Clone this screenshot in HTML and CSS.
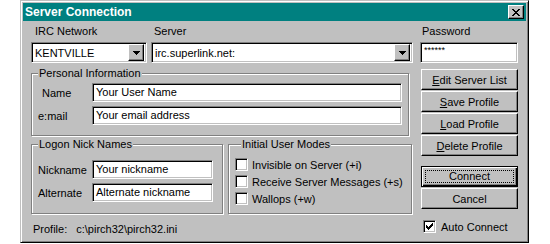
FILE: index.html
```html
<!DOCTYPE html>
<html lang="en">
<head>
    <meta charset="UTF-8">
    <title>Server Connection</title>
    <link rel="stylesheet" href="styles.css">
</head>
<body>
    <div class="dialog">
        <div class="titlebar">
            <span class="title">Server Connection</span>
            <button class="close" type="button">
                <svg width="8" height="7" viewBox="0 0 8 7" shape-rendering="crispEdges">
                    <path d="M0 0h2v1h-2z M6 0h2v1h-2z M1 1h2v1h-2z M5 1h2v1h-2z M2 2h4v1h-4z M3 3h2v1h-2z M2 4h4v1h-4z M1 5h2v1h-2z M5 5h2v1h-2z M0 6h2v1h-2z M6 6h2v1h-2z" fill="#000"/>
                </svg>
            </button>
        </div>

        <div class="content">
            <div class="main">
                <div class="top-row">
                    <div class="field network">
                        <label class="caption">IRC Network</label>
                        <div class="combo">
                            <span class="combo-text">KENTVILLE</span>
                            <span class="drop"><svg width="7" height="4" viewBox="0 0 7 4" shape-rendering="crispEdges"><path d="M0 0h7v1h-7z M1 1h5v1h-5z M2 2h3v1h-3z M3 3h1v1h-1z" fill="#000"/></svg></span>
                        </div>
                    </div>
                    <div class="field server">
                        <label class="caption">Server</label>
                        <div class="combo">
                            <span class="combo-text">irc.superlink.net:</span>
                            <span class="drop"><svg width="7" height="4" viewBox="0 0 7 4" shape-rendering="crispEdges"><path d="M0 0h7v1h-7z M1 1h5v1h-5z M2 2h3v1h-3z M3 3h1v1h-1z" fill="#000"/></svg></span>
                        </div>
                    </div>
                </div>

                <fieldset class="group personal">
                    <legend>Personal Information</legend>
                    <div class="row">
                        <label class="name-label">Name</label>
                        <div class="edit">Your User Name</div>
                    </div>
                    <div class="row">
                        <label class="mail-label">e:mail</label>
                        <div class="edit">Your email address</div>
                    </div>
                </fieldset>

                <div class="groups">
                    <fieldset class="group nicks">
                        <legend>Logon Nick Names</legend>
                        <div class="row">
                            <label>Nickname</label>
                            <div class="edit">Your nickname</div>
                        </div>
                        <div class="row">
                            <label>Alternate</label>
                            <div class="edit">Alternate nickname</div>
                        </div>
                    </fieldset>
                    <fieldset class="group modes">
                        <legend>Initial User Modes</legend>
                        <div class="check"><span class="box"></span>Invisible on Server (+i)</div>
                        <div class="check"><span class="box"></span>Receive Server Messages (+s)</div>
                        <div class="check"><span class="box"></span>Wallops (+w)</div>
                    </fieldset>
                </div>

                <div class="profile"><span class="profile-label">Profile:</span>c:\pirch32\pirch32.ini</div>
            </div>

            <div class="side">
                <label class="caption">Password</label>
                <div class="edit password">******</div>

                <div class="buttons">
                    <button type="button" class="btn"><u>E</u>dit Server List</button>
                    <button type="button" class="btn"><u>S</u>ave Profile</button>
                    <button type="button" class="btn"><u>L</u>oad Profile</button>
                    <button type="button" class="btn"><u>D</u>elete Profile</button>
                </div>

                <div class="buttons actions">
                    <button type="button" class="btn default"><span class="focus">Connect</span></button>
                    <button type="button" class="btn">Cancel</button>
                </div>

                <div class="check auto">
                    <span class="box"><svg width="7" height="7" viewBox="0 0 7 7" shape-rendering="crispEdges"><path d="M0 2h1v3h-1z M1 3h1v3h-1z M2 4h1v3h-1z M3 3h1v3h-1z M4 2h1v3h-1z M5 1h1v3h-1z M6 0h1v3h-1z" fill="#000"/></svg></span>Auto Connect
                </div>
            </div>
        </div>
    </div>
</body>
</html>
```

FILE: styles.css
```css
body {
    margin: 0;
    background: #fff;
    font-family: "Liberation Sans", Arial, sans-serif;
    font-size: 11px;
    color: #000;
}
.dialog {
    margin-left: 20px;
    width: 509px;
    height: 243px;
    box-sizing: border-box;
    background: #c0c0c0;
    border: 1px solid;
    border-color: #c0c0c0 #000 #000 #c0c0c0;
    box-shadow: inset 1px 1px #fff, inset -1px -1px #808080;
    padding: 2px;
}
.titlebar {
    height: 18px;
    background: #008080;
    display: flex;
    align-items: center;
    justify-content: space-between;
    padding: 0 2px 0 2px;
}
.title {
    color: #fff;
    font-weight: bold;
    font-size: 12px;
}
.close {
    width: 16px;
    height: 14px;
    padding: 0;
    background: #c0c0c0;
    border: 1px solid;
    border-color: #fff #000 #000 #fff;
    box-shadow: inset -1px -1px #808080;
    display: flex;
    align-items: center;
    justify-content: center;
}
.content {
    display: flex;
    padding: 4px 8px 0 8px;
    gap: 7px;
}
.main {
    width: 382px;
}
.caption {
    display: block;
    line-height: 13px;
    margin-bottom: 4px;
    padding-left: 4px;
}
.top-row {
    display: flex;
    gap: 4px;
}
.network {
    width: 116px;
}
.server {
    width: 262px;
}
.server .caption {
    padding-left: 3px;
}
.combo, .edit {
    box-sizing: border-box;
    background: #fff;
    border: 1px solid;
    border-color: #808080 #fff #fff #808080;
    box-shadow: inset 1px 1px #000, inset -1px -1px #c0c0c0;
}
.combo {
    height: 21px;
    display: flex;
    align-items: center;
    padding: 2px 2px 2px 3px;
}
.combo-text {
    flex: 1;
}
.drop {
    width: 16px;
    height: 17px;
    box-sizing: border-box;
    background: #c0c0c0;
    border: 1px solid;
    border-color: #fff #000 #000 #fff;
    box-shadow: inset -1px -1px #808080;
    display: flex;
    align-items: center;
    justify-content: center;
}
.edit {
    height: 19px;
    line-height: 17px;
    padding-left: 3px;
    white-space: nowrap;
}
.group {
    box-sizing: border-box;
    margin: 0;
    padding: 0;
    border: 1px solid #808080;
    box-shadow: inset 1px 1px #fff, 1px 1px #fff;
}
.group legend {
    margin-left: 6px;
    padding: 0 1px;
    line-height: 13px;
    background: #c0c0c0;
}
.personal {
    margin-top: 4px;
    width: 378px;
    padding: 3px 6px 10px 0;
}
.row {
    display: flex;
    align-items: center;
}
.row + .row {
    margin-top: 4px;
}
.row label {
    width: 60px;
    box-sizing: border-box;
    padding-left: 6px;
}
.row .name-label {
    padding-left: 10px;
}
.row .edit {
    flex: 1;
}
.groups {
    display: flex;
    gap: 5px;
    margin-top: 2px;
}
.nicks {
    width: 192px;
    padding: 9px 9px 10px 0;
}
.modes {
    width: 184px;
    padding: 5px 0 6px 6px;
}
.check {
    display: flex;
    align-items: center;
    height: 17px;
}
.box {
    width: 13px;
    height: 13px;
    box-sizing: border-box;
    margin-right: 4px;
    background: #fff;
    border: 1px solid;
    border-color: #808080 #fff #fff #808080;
    box-shadow: inset 1px 1px #000, inset -1px -1px #c0c0c0;
    display: flex;
    align-items: center;
    justify-content: center;
}
.profile {
    margin-top: 9px;
    padding-left: 2px;
    line-height: 13px;
}
.profile-label {
    margin-right: 9px;
}
.side {
    width: 99px;
}
.side .caption {
    padding-left: 2px;
}
.password {
    width: 98px;
    height: 21px;
    line-height: 14px;
    font-size: 9px;
}
.buttons {
    display: flex;
    flex-direction: column;
    gap: 1px;
    margin-top: 6px;
    padding-left: 1px;
}
.btn {
    height: 21px;
    padding: 0;
    font-family: "Liberation Sans", Arial, sans-serif;
    font-size: 11px;
    color: #000;
    background: #c0c0c0;
    border: 1px solid;
    border-color: #fff #000 #000 #fff;
    box-shadow: inset -1px -1px #808080;
}
.actions {
    margin-top: 10px;
}
.btn.default {
    border: 1px solid #000;
    box-shadow: inset 1px 1px #fff, inset -1px -1px #000, inset -2px -2px #808080;
    display: flex;
    padding: 3px;
}
.focus {
    flex: 1;
    border: 1px dotted #000;
    line-height: 11px;
}
.auto {
    margin-top: 9px;
    padding-left: 3px;
}
.auto .box {
    margin-right: 5px;
}
```
